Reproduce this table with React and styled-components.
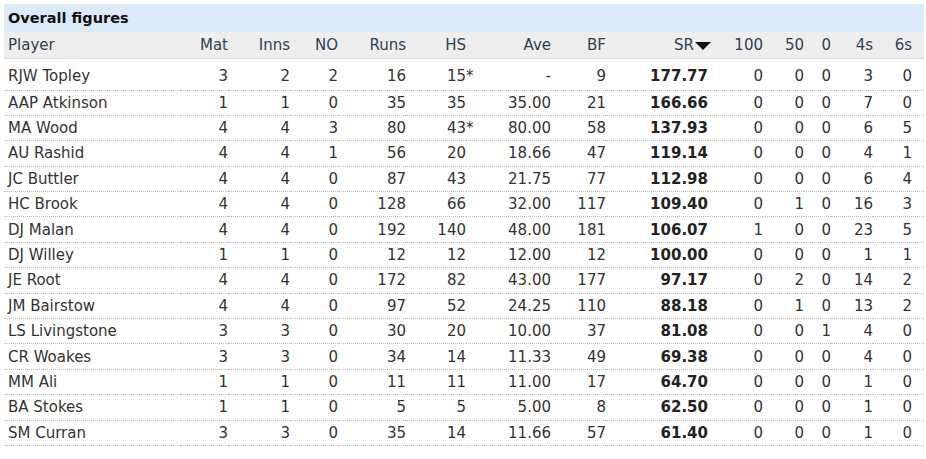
import styled, { createGlobalStyle } from 'styled-components'

const GlobalStyle = createGlobalStyle`
    body {
        margin: 0;
        background: #ffffff;
        font-family: 'DejaVu Sans', Verdana, sans-serif;
        color: #333333;
    }
`

const Wrapper = styled.section`
    padding: 4px 2px 0 4px;
    width: 920px;
`

const Title = styled.h2`
    margin: 0;
    height: 28px;
    padding: 0 4px;
    display: flex;
    align-items: center;
    background-color: #dcebf9;
    font-size: 14.5px;
    font-weight: 700;
    color: #111111;
`

const Table = styled.table`
    width: 920px;
    border-collapse: collapse;
    table-layout: fixed;
    font-size: 15px;
`

const Col = styled.col`
    width: ${props => props.$w}px;
`

const HeadCell = styled.th`
    height: 26px;
    padding: 0 ${props => props.$pr || 0}px 0 ${props => props.$left ? 4 : 0}px;
    background-color: #eeeeee;
    border-bottom: 1px solid #dddddd;
    font-weight: 400;
    color: #2f4155;
    text-align: ${props => props.$left ? 'left' : 'right'};
    white-space: nowrap;
`

const Row = styled.tr`
    &:first-child td {
        height: 27.5px;
        padding-top: 3px;
    }
`

const Cell = styled.td`
    height: 24.4px;
    padding: 0 ${props => props.$pr || 0}px 0 ${props => props.$left ? 4 : 0}px;
    border-bottom: 1px dotted #bdbdbd;
    text-align: ${props => props.$left ? 'left' : 'right'};
    font-weight: ${props => props.$bold ? 700 : 400};
    color: ${props => props.$bold ? '#222222' : '#333333'};
    white-space: nowrap;
`

const Star = styled.span`
    display: inline-block;
    width: 0;
    overflow: visible;
`

const SortArrow = styled.span`
    display: inline-block;
    width: 0;
    height: 0;
    margin-left: 1px;
    margin-right: -3px;
    border-left: 8px solid transparent;
    border-right: 8px solid transparent;
    border-top: 8px solid #111111;
    vertical-align: 0;
`

const columns = [
    { key: 'player', label: 'Player', w: 176, left: true },
    { key: 'mat', label: 'Mat', w: 48 },
    { key: 'inns', label: 'Inns', w: 62 },
    { key: 'no', label: 'NO', w: 48 },
    { key: 'runs', label: 'Runs', w: 68 },
    { key: 'hs', label: 'HS', w: 60 },
    { key: 'ave', label: 'Ave', w: 85 },
    { key: 'bf', label: 'BF', w: 55 },
    { key: 'sr', label: 'SR', w: 102, bold: true, sorted: true },
    { key: 'h', label: '100', w: 55 },
    { key: 'f', label: '50', w: 41 },
    { key: 'z', label: '0', w: 27 },
    { key: 'fours', label: '4s', w: 42 },
    { key: 'sixes', label: '6s', w: 51, pr: 12 },
]

const players = [
    ['RJW Topley', 3, 2, 2, 16, '15*', '-', 9, '177.77', 0, 0, 0, 3, 0],
    ['AAP Atkinson', 1, 1, 0, 35, '35', '35.00', 21, '166.66', 0, 0, 0, 7, 0],
    ['MA Wood', 4, 4, 3, 80, '43*', '80.00', 58, '137.93', 0, 0, 0, 6, 5],
    ['AU Rashid', 4, 4, 1, 56, '20', '18.66', 47, '119.14', 0, 0, 0, 4, 1],
    ['JC Buttler', 4, 4, 0, 87, '43', '21.75', 77, '112.98', 0, 0, 0, 6, 4],
    ['HC Brook', 4, 4, 0, 128, '66', '32.00', 117, '109.40', 0, 1, 0, 16, 3],
    ['DJ Malan', 4, 4, 0, 192, '140', '48.00', 181, '106.07', 1, 0, 0, 23, 5],
    ['DJ Willey', 1, 1, 0, 12, '12', '12.00', 12, '100.00', 0, 0, 0, 1, 1],
    ['JE Root', 4, 4, 0, 172, '82', '43.00', 177, '97.17', 0, 2, 0, 14, 2],
    ['JM Bairstow', 4, 4, 0, 97, '52', '24.25', 110, '88.18', 0, 1, 0, 13, 2],
    ['LS Livingstone', 3, 3, 0, 30, '20', '10.00', 37, '81.08', 0, 0, 1, 4, 0],
    ['CR Woakes', 3, 3, 0, 34, '14', '11.33', 49, '69.38', 0, 0, 0, 4, 0],
    ['MM Ali', 1, 1, 0, 11, '11', '11.00', 17, '64.70', 0, 0, 0, 1, 0],
    ['BA Stokes', 1, 1, 0, 5, '5', '5.00', 8, '62.50', 0, 0, 0, 1, 0],
    ['SM Curran', 3, 3, 0, 35, '14', '11.66', 57, '61.40', 0, 0, 0, 1, 0],
]

function renderValue(col, value) {
    if (col.key === 'hs' && String(value).endsWith('*')) {
        return (
            <>
                {String(value).slice(0, -1)}
                <Star>*</Star>
            </>
        )
    }
    return value
}

function App() {
    return (
        <>
            <GlobalStyle />
            <Wrapper>
                <Title>Overall figures</Title>
                <Table>
                    <colgroup>
                        {columns.map(col => <Col key={col.key} $w={col.w} />)}
                    </colgroup>
                    <thead>
                        <tr>
                            {columns.map(col => (
                                <HeadCell key={col.key} $left={col.left} $pr={col.pr}>
                                    {col.label}
                                    {col.sorted && <SortArrow />}
                                </HeadCell>
                            ))}
                        </tr>
                    </thead>
                    <tbody>
                        {players.map(row => (
                            <Row key={row[0]}>
                                {columns.map((col, i) => (
                                    <Cell key={col.key} $left={col.left} $bold={col.bold} $pr={col.pr}>
                                        {renderValue(col, row[i])}
                                    </Cell>
                                ))}
                            </Row>
                        ))}
                    </tbody>
                </Table>
            </Wrapper>
        </>
    )
}

export default App
